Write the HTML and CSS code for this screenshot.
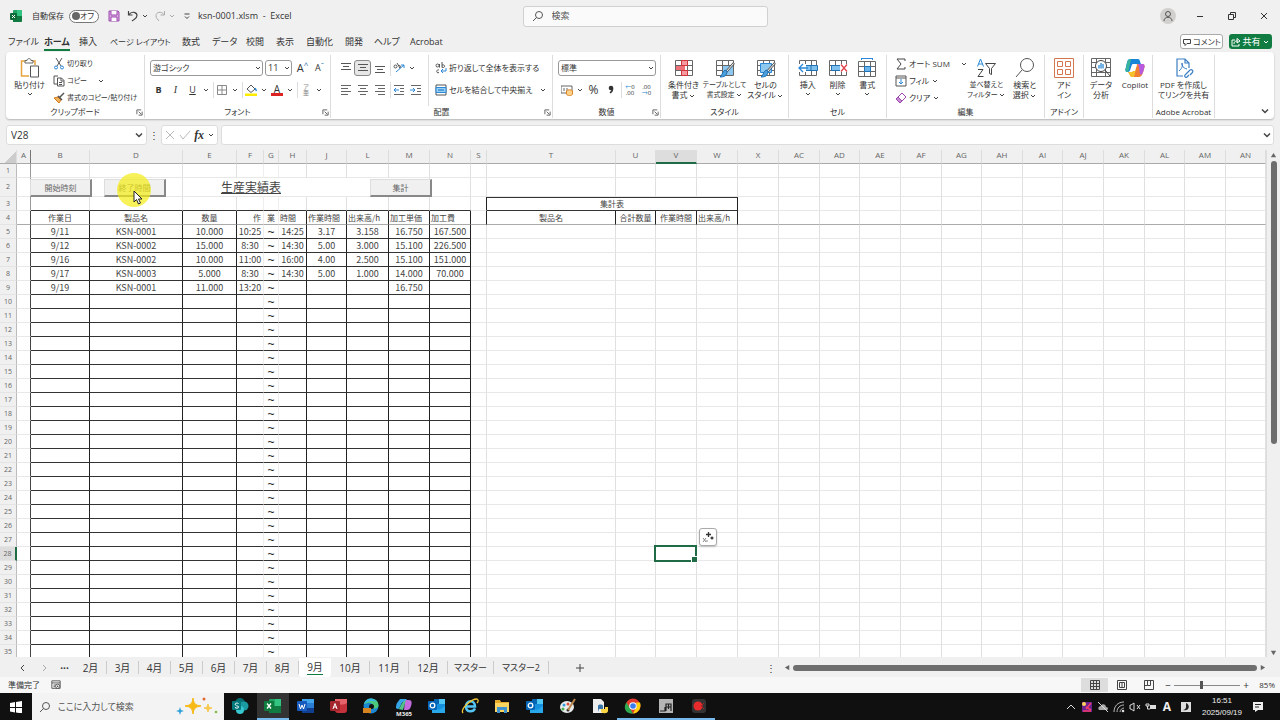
FILE: index.html
```html
<!DOCTYPE html>
<html lang="ja">

<head>
    <meta charset="UTF-8">
    <meta name="viewport" content="width=device-width, initial-scale=1.0">
    <title>ksn-0001.xlsm - Excel</title>
    <link rel="stylesheet" href="styles.css">
</head>

<body>
    <!-- アイコン定義 -->
    <svg class="sprite" aria-hidden="true">
        <symbol id="chev" viewBox="0 0 8 8"><path d="M2 3l2 2 2-2" fill="none" stroke="#444" /></symbol>
        <symbol id="launch" viewBox="0 0 8 8"><path d="M1 6V1h5M3 3l3 3M7 3v4H3" fill="none" stroke="#555" /></symbol>
        <symbol id="grid" viewBox="0 0 20 20"><path d="M1.500 2.500h17v15h-17zM1.500 7.500h17M1.500 12.500h17M7.500 2.500v15M13.500 2.500v15" fill="#fff" stroke="#666" /></symbol>
        <symbol id="person" viewBox="0 0 16 16"><circle cx="8" cy="8" r="8" fill="#d2d0ce" /><circle cx="8" cy="6" r="2.500" fill="none" stroke="#555" /><path d="M4 13c0-5 8-5 8 0" fill="none" stroke="#555" /></symbol>
        <symbol id="lens" viewBox="0 0 12 12"><circle cx="7" cy="5" r="3.500" fill="none" stroke="#555" /><path d="M4.500 7.500L1 11" stroke="#555" /></symbol>
        <symbol id="outlook" viewBox="0 0 18 16"><path d="M6 1h11v13H6z" fill="#1490df" /><path d="M6 1h5v5H6z" fill="#0a64ad" /><path d="M11 1h6v5h-6z" fill="#50c8f5" /><path d="M4 8l7 4 6-4v7H4z" fill="#28a8ea" /><rect y="3" width="9" height="9" rx="1" fill="#0364b8" /><circle cx="4.500" cy="7.500" r="2.300" fill="none" stroke="#fff" stroke-width="1.300" /></symbol>
    </svg>

    <!-- タイトルバー -->
    <header class="titlebar">
        <div class="quick">
            <svg class="logo" viewBox="0 0 12 12"><rect x="3" width="9" height="12" rx="1" fill="#21a366" /><path d="M3 6h9v5l-1 1H3z" fill="#107c41" /><path d="M7 0h4l1 1v5H7z" fill="#33c481" /><rect y="3" width="7" height="7" rx="1" fill="#0f6b38" /><path d="M2 5l3 3M5 5L2 8" stroke="#fff" /></svg>
            <label for="autosave">自動保存</label>
            <label class="toggle"><input type="checkbox" id="autosave"><span>オフ</span></label>
            <button class="q save" aria-label="上書き保存"><svg viewBox="0 0 12 12"><path d="M1 1h9l1 1v9H1z" fill="#d9a5e3" stroke="#9b4aab" /><path d="M3 1v4h6V1M3 11V7h6v4" fill="#fff" stroke="#9b4aab" /></svg></button>
            <button class="q" aria-label="元に戻す"><svg viewBox="0 0 12 12"><path d="M1.500 1v4h4M2 4.500c3-4 8-2 8 1S7 9 5 11" fill="none" stroke="#444" stroke-width="1.200" /></svg></button>
            <button class="drop" aria-label="元に戻す履歴"><svg><use href="#chev" /></svg></button>
            <button class="q pale" aria-label="やり直し"><svg viewBox="0 0 12 12"><path d="M10.500 1v4h-4M10 4.500c-3-4-8-2-8 1s2 4 3 5.500" fill="none" stroke="#444" /></svg></button>
            <button class="drop pale" aria-label="やり直し履歴"><svg><use href="#chev" /></svg></button>
            <button class="q more" aria-label="クイック アクセス"><svg viewBox="0 0 12 12"><path d="M3.500 4h5M4 6.500l2 2 2-2" fill="none" stroke="#444" /></svg></button>
            <span class="file-name">ksn-0001.xlsm&nbsp; - &nbsp;Excel</span>
        </div>
        <div class="search">
            <svg><use href="#lens" /></svg>
            <input type="text" placeholder="検索" aria-label="検索">
        </div>
        <div class="window-buttons">
            <button class="avatar" aria-label="アカウント"><svg><use href="#person" /></svg></button>
            <button aria-label="最小化"><svg viewBox="0 0 12 12"><path d="M3 6.500h6" stroke="#333" /></svg></button>
            <button aria-label="元のサイズ"><svg viewBox="0 0 12 12"><path d="M2.500 4.500h5v5h-5zM4.500 4.500v-2h5v5h-2" fill="none" stroke="#333" /></svg></button>
            <button aria-label="閉じる"><svg viewBox="0 0 12 12"><path d="M3 3l6 6M9 3L3 9" stroke="#333" /></svg></button>
        </div>
    </header>

    <!-- リボンタブ -->
    <nav class="menu">
        <a href="#">ファイル</a><a href="#" class="active">ホーム</a><a href="#">挿入</a><a href="#" class="long">ページ レイアウト</a><a href="#">数式</a><a href="#">データ</a><a href="#">校閲</a><a href="#">表示</a><a href="#">自動化</a><a href="#">開発</a><a href="#">ヘルプ</a><a href="#">Acrobat</a>
        <div class="menu-right">
            <button class="comment"><svg viewBox="0 0 10 10"><path d="M1.500 2.500h7v4H5L3 8.500v-2H1.500z" fill="none" stroke="#444" /></svg>コメント</button>
            <button class="share"><svg viewBox="0 0 10 10"><path d="M4 3H1v6h7V7M3 7c0-3 2-3 4-3M6 1.500L9 4 6 6z" fill="none" stroke="#fff" /></svg>共有<svg class="caret" viewBox="0 0 8 8"><path d="M2 3l2 2 2-2" fill="none" stroke="#fff" /></svg></button>
        </div>
    </nav>

    <!-- リボン -->
    <section class="ribbon">
        <div class="group g-clip">
            <div class="tools">
                <button class="big"><svg viewBox="0 0 20 20"><path d="M5 3H1.500v15H9M12 3h3v4" fill="none" stroke="#e8a33d" stroke-width="1.500" /><path d="M5 5V2.500h2C7 0 11 0 11 2.500h2V5z" fill="#fff" stroke="#666" /><path d="M10.500 8h8v11h-8z" fill="#fff" stroke="#555" /></svg><span>貼り付け</span><svg class="caret"><use href="#chev" /></svg></button>
                <div class="rows">
                    <button><svg viewBox="0 0 12 12"><path d="M3 0l5 8M9 0L4 8" stroke="#555" /><circle cx="3" cy="9.500" r="1.500" fill="none" stroke="#2b88d8" /><circle cx="9" cy="9.500" r="1.500" fill="none" stroke="#2b88d8" /></svg>切り取り</button>
                    <button><svg viewBox="0 0 12 12"><path d="M4 9H1V1h4M4.500 3h4L11 5.500V11H4.500zM8 3v3h3M6 7.500h3M6 9.500h3" fill="none" stroke="#555" /></svg>コピー<svg class="caret far"><use href="#chev" /></svg></button>
                    <button><svg viewBox="0 0 12 12"><path d="M1 6l5 5 2-3-3-3z" fill="#f2b25c" stroke="#d07a1c" /><path d="M5 4l4 4M7 5l4-4" stroke="#555" stroke-width="1.500" /></svg>書式のコピー/貼り付け</button>
                </div>
            </div>
            <div class="caption">クリップボード<svg><use href="#launch" /></svg></div>
        </div>

        <div class="group g-font">
            <div class="tools lines">
                <div class="line">
                    <span class="combo font-name"><select aria-label="フォント"><option>游ゴシック</option></select><svg><use href="#chev" /></svg></span>
                    <span class="combo font-size"><select aria-label="フォント サイズ"><option>11</option></select><svg><use href="#chev" /></svg></span>
                    <button class="t grow">A<sup>^</sup></button>
                    <button class="t shrink">A<sup>ˇ</sup></button>
                </div>
                <div class="line">
                    <button class="t"><b>B</b></button><button class="t serif"><i>I</i></button><button class="t"><u>U</u></button><button class="drop" aria-label="下線"><svg><use href="#chev" /></svg></button>
                    <button class="t bar" aria-label="罫線"><svg viewBox="0 0 12 12"><path d="M1.500 1.500h9v9h-9zM6 1.500v9M1.500 6h9" fill="none" stroke="#888" /></svg></button><button class="drop" aria-label="罫線の種類"><svg><use href="#chev" /></svg></button>
                    <button class="t bar" aria-label="塗りつぶし"><svg viewBox="0 0 12 12"><path d="M2 5l4-4 4 4-4 3.500z" fill="#fff" stroke="#555" /><path d="M10 4l1.500 3" stroke="#2b88d8" stroke-width="1.500" /><path d="M0 9.500h12V12H0z" fill="#ffec00" /></svg></button><button class="drop" aria-label="塗りつぶしの色"><svg><use href="#chev" /></svg></button>
                    <button class="t color">A</button><button class="drop" aria-label="文字の色"><svg><use href="#chev" /></svg></button>
                    <button class="t bar ruby"><span>ア<br>亜</span></button><button class="drop" aria-label="ふりがな"><svg><use href="#chev" /></svg></button>
                </div>
            </div>
            <div class="caption">フォント<svg><use href="#launch" /></svg></div>
        </div>

        <div class="group g-align">
            <div class="tools">
                <div class="lines align-left">
                    <div class="line">
                        <button class="t" aria-label="上揃え"><svg viewBox="0 0 12 12"><path d="M1 1.500h10M3 4.500h6M1 7.500h10" stroke="#555" /></svg></button>
                        <button class="t on" aria-label="上下中央揃え"><svg viewBox="0 0 12 12"><path d="M1 2.500h10M3 5.500h6M1 8.500h10" stroke="#555" /></svg></button>
                        <button class="t" aria-label="下揃え"><svg viewBox="0 0 12 12"><path d="M1 4.500h10M3 7.500h6M1 10.500h10" stroke="#555" /></svg></button>
                        <button class="t bar" aria-label="方向"><svg viewBox="0 0 12 12"><path d="M3 10l8-7M8 3h3v3" fill="none" stroke="#2b88d8" /><circle cx="2.500" cy="4.500" r="1.500" fill="none" stroke="#555" /><path d="M4 1l3 5M6 6c2 0 2-3 0-2.500" fill="none" stroke="#555" /></svg></button><button class="drop" aria-label="方向の種類"><svg><use href="#chev" /></svg></button>
                    </div>
                    <div class="line">
                        <button class="t" aria-label="左揃え"><svg viewBox="0 0 12 12"><path d="M1 1.500h10M1 4.500h7M1 7.500h10M1 10.500h7" stroke="#666" /></svg></button>
                        <button class="t" aria-label="中央揃え"><svg viewBox="0 0 12 12"><path d="M1 1.500h10M3 4.500h6M1 7.500h10M3 10.500h6" stroke="#666" /></svg></button>
                        <button class="t" aria-label="右揃え"><svg viewBox="0 0 12 12"><path d="M1 1.500h10M4 4.500h7M1 7.500h10M4 10.500h7" stroke="#666" /></svg></button>
                        <button class="t bar" aria-label="インデントを減らす"><svg viewBox="0 0 12 12"><path d="M1 1.500h10M7 4.500h4M7 7.500h4M1 10.500h10" stroke="#666" /><path d="M6 6H1M3 4L1 6l2 2" fill="none" stroke="#2b88d8" /></svg></button>
                        <button class="t" aria-label="インデントを増やす"><svg viewBox="0 0 12 12"><path d="M1 1.500h10M7 4.500h4M7 7.500h4M1 10.500h10" stroke="#666" /><path d="M0 6h5M3 4l2 2-2 2" fill="none" stroke="#2b88d8" /></svg></button>
                    </div>
                </div>
                <div class="lines align-right">
                    <button class="line"><svg viewBox="0 0 12 12"><circle cx="2.500" cy="3.500" r="1.500" fill="none" stroke="#555" /><path d="M4.500 2v3.500M7 0v5.500M7 3c4-1 3 4 0 2M4 8c-3-1-3 4 0 2.500" fill="none" stroke="#555" /><path d="M11 6v3H6M8 7L6 9l2 2" fill="none" stroke="#2b88d8" /></svg>折り返して全体を表示する</button>
                    <button class="line"><svg viewBox="0 0 12 12"><path d="M1 1h10v10H1z" fill="#fff" stroke="#555" /><path d="M1 3.500h10v5H1z" fill="#9bd0f5" stroke="#2b88d8" /><path d="M3 6h6" stroke="#106ebe" /></svg>セルを結合して中央揃え<svg class="caret far"><use href="#chev" /></svg></button>
                </div>
            </div>
            <div class="caption">配置<svg><use href="#launch" /></svg></div>
        </div>

        <div class="group g-num">
            <div class="tools lines">
                <div class="line"><span class="combo format"><select aria-label="表示形式"><option>標準</option></select><svg><use href="#chev" /></svg></span></div>
                <div class="line">
                    <button class="t" aria-label="通貨"><svg viewBox="0 0 12 12"><path d="M0 2h11v7H0zM3 4v3M6 4v3" fill="none" stroke="#666" /><ellipse cx="8.500" cy="7" rx="3" ry="1.200" fill="#ffd28a" stroke="#d8852a" /><path d="M5.500 7v3c0 2 6 2 6 0V7" fill="#ffd28a" stroke="#d8852a" /></svg></button><button class="drop" aria-label="通貨の種類"><svg><use href="#chev" /></svg></button>
                    <button class="t percent">%</button>
                    <button class="t comma" aria-label="桁区切り"><svg viewBox="0 0 12 12"><circle cx="6" cy="4" r="2.300" fill="#333" /><path d="M7.500 4c.5 3-1 4-2.500 5" fill="none" stroke="#333" stroke-width="1.400" /></svg></button>
                    <button class="t bar digits"><span><em>←</em>0<br>.00</span></button>
                    <button class="t digits"><span>.00<br><em>→</em>0</span></button>
                </div>
            </div>
            <div class="caption">数値<svg><use href="#launch" /></svg></div>
        </div>

        <div class="group g-style">
            <div class="tools">
                <button class="big"><svg viewBox="0 0 20 20"><use href="#grid" /><path d="M7.500 2.500h6v5h-6zM7.500 12.500h6v5h-6z" fill="#f59aa0" stroke="#d13438" /><path d="M2 8h9v4H2z" fill="#ee7078" /></svg><span>条件付き<br>書式<svg><use href="#chev" /></svg></span></button>
                <button class="big narrow"><svg viewBox="0 0 20 20"><use href="#grid" /><path d="M8 8h10v9H8z" fill="#8cc8f0" /><path d="M19 5l-8 9" stroke="#555" stroke-width="2.500" /><path d="M18.500 5.500l-7 8" stroke="#fff" /><path d="M12 13c0 5-3 6-7 6 2-1 2-5 5-7z" fill="#4ba0dc" stroke="#2171b5" /></svg><span>テーブルとして<br>書式設定<svg><use href="#chev" /></svg></span></button>
                <button class="big"><svg viewBox="0 0 20 20"><use href="#grid" /><path d="M4.500 5.500h11v9h-11z" fill="#8cc8f0" stroke="#2b88d8" /><path d="M19 5l-8 9" stroke="#555" stroke-width="2.500" /><path d="M18.500 5.500l-7 8" stroke="#fff" /><path d="M12 13c0 5-3 6-7 6 2-1 2-5 5-7z" fill="#4ba0dc" stroke="#2171b5" /></svg><span>セルの<br>スタイル<svg><use href="#chev" /></svg></span></button>
            </div>
            <div class="caption">スタイル</div>
        </div>

        <div class="group g-cell">
            <div class="tools">
                <button class="big"><svg viewBox="0 0 20 20"><use href="#grid" /><path d="M6 7.500h13.500v5H6z" fill="#7fc1ee" stroke="#2171b5" /><path d="M13 7.500v5" stroke="#2171b5" /><path d="M0 6h8v8H0z" fill="#fff" /><path d="M10 10H1M5 6l-4 4 4 4" fill="none" stroke="#2b88d8" stroke-width="1.300" /></svg><span>挿入</span><svg class="caret"><use href="#chev" /></svg></button>
                <button class="big"><svg viewBox="0 0 20 20"><use href="#grid" /><path d="M3.500 7.500h9v5h-9z" fill="#7fc1ee" stroke="#2171b5" /><path d="M12 6h8v8h-8z" fill="#fff" /><path d="M13 6.500l6 7M19 6.500l-6 7" stroke="#e0444c" stroke-width="1.300" /></svg><span>削除</span><svg class="caret"><use href="#chev" /></svg></button>
                <button class="big"><svg viewBox="0 0 20 20"><use href="#grid" y="1" /><path d="M7.500 8.500h6v5h-6z" fill="#6bb5ea" stroke="#2171b5" /><path d="M4 .5h12M4.500 0v2M15.500 0v2" stroke="#2b88d8" /></svg><span>書式</span><svg class="caret"><use href="#chev" /></svg></button>
            </div>
            <div class="caption">セル</div>
        </div>

        <div class="group g-edit">
            <div class="tools">
                <div class="rows">
                    <button><svg viewBox="0 0 12 12"><path d="M10 3V1H2l4 5-4 5h8V9" fill="none" stroke="#444" /></svg>オート SUM<svg class="caret far"><use href="#chev" /></svg></button>
                    <button><svg viewBox="0 0 12 12"><path d="M1 1h10v10H1zM1 3h10" fill="none" stroke="#555" /><path d="M6 4v5M4 7l2 2 2-2" fill="none" stroke="#2b88d8" /></svg>フィル<svg class="caret"><use href="#chev" /></svg></button>
                    <button><svg viewBox="0 0 12 12"><path d="M1 7l6-6 4 4-6 6z" fill="#fff" stroke="#9b4aab" /><path d="M1 7l2-2 4 4-2 2z" fill="#c98ad6" stroke="#9b4aab" /></svg>クリア<svg class="caret"><use href="#chev" /></svg></button>
                </div>
                <button class="big narrow"><svg viewBox="0 0 20 20"><path d="M1.500 8.500L4.500 1l3 7.500M2.500 6h4" fill="none" stroke="#2b88d8" /><path d="M2 11.500h5l-5 7h5.500" fill="none" stroke="#444" /><path d="M9.500 5.500h10l-4 5v6l-2-1v-5z" fill="none" stroke="#444" /></svg><span>並べ替えと<br>フィルター<svg><use href="#chev" /></svg></span></button>
                <button class="big"><svg viewBox="0 0 20 20"><circle cx="12" cy="7" r="6.500" fill="none" stroke="#555" /><path d="M7 12L1 19" stroke="#555" /></svg><span>検索と<br>選択<svg><use href="#chev" /></svg></span></button>
            </div>
            <div class="caption">編集</div>
        </div>

        <div class="group g-addin">
            <div class="tools">
                <button class="big"><svg viewBox="0 0 20 20"><path d="M.5 .5h19v19H.5zM3.500 3.500h5v5h-5zM11.500 3.500h5v5h-5zM3.500 11.500h5v5h-5zM11.500 11.500h5v5h-5z" fill="none" stroke="#d5774e" /></svg><span>アド<br>イン</span></button>
            </div>
            <div class="caption">アドイン</div>
        </div>

        <div class="group g-data">
            <div class="tools">
                <button class="big"><svg viewBox="0 0 20 20"><path d="M.5 .5h19v18H.5zM.5 4.500h19M.5 9.500h19M.5 14.500h19M5.500 .5v18M14.500 .5v18" fill="none" stroke="#666" /><circle cx="10" cy="8" r="5.500" fill="#fff" stroke="#444" /><path d="M8 10.500V7M10 10.500V5M12 10.500V6" stroke="#2b88d8" stroke-width="1.300" /><path d="M14 12l5 6" stroke="#444" /></svg><span>データ<br>分析</span></button>
                <button class="big"><svg viewBox="0 0 20 20"><path d="M5 1h8c2 0 2 3 3 5H8C6 6 6 14 3 14c-3 0-3-2-2-5C2 5 2 1 5 1z" fill="#1784d8" /><path d="M1 10c1-4 1-9 5-9-1 5-2 11-3 13-3 0-3-2-2-4z" fill="#36b59b" /><path d="M3 14h4c3 0 3-8 6-8h4c3 0 3 2 2 5-1 4-2 8-5 8H7c-2 0-2-3-4-5z" fill="#f08030" /><path d="M13 6h4c3 0 3 2 2 5-1 3-1 4-3 6-2-1-1-6-3-11z" fill="#b65be0" /><path d="M3 14h4l4-3-2 8H7c-2 0-2-3-4-5z" fill="#f5c02c" /><path d="M9 7h3l-2 6H7z" fill="#fff" /></svg><span>Copilot</span></button>
            </div>
            <div class="caption"></div>
        </div>

        <div class="group g-pdf">
            <div class="tools">
                <button class="big"><svg viewBox="0 0 20 20"><path d="M9 18H3V1h8l4 4v5M11 1v4h4" fill="none" stroke="#3b7fc4" stroke-width="1.200" /><path d="M5 13c4-3 4-8 3-8s0 5 5 6" fill="none" stroke="#3b7fc4" /><path d="M12 16l4-4c2-1 4 1 2 3l-2 2M14 14l-3 3c-1 2 1 3 2 2l2-2" fill="none" stroke="#3b7fc4" stroke-width="1.200" /></svg><span>PDF を作成し<br>てリンクを共有</span></button>
            </div>
            <div class="caption">Adobe Acrobat</div>
        </div>
        <button class="collapse drop" aria-label="リボンを折りたたむ"><svg><use href="#chev" /></svg></button>
    </section>

    <!-- 数式バー -->
    <div class="formula">
        <div class="name-box"><input type="text" value="V28" aria-label="名前ボックス"><svg><use href="#chev" /></svg></div>
        <span class="dots">⋮</span>
        <div class="fx">
            <button class="pale" aria-label="キャンセル"><svg viewBox="0 0 12 12"><path d="M2 2l8 8M10 2l-8 8" stroke="#555" /></svg></button>
            <button class="pale" aria-label="入力"><svg viewBox="0 0 12 12"><path d="M1 6l3 4 7-8" fill="none" stroke="#555" /></svg></button>
            <button class="fn">fx</button>
            <svg class="caret"><use href="#chev" /></svg>
        </div>
        <div class="formula-input"><input type="text" aria-label="数式バー"><svg><use href="#chev" /></svg></div>
    </div>

    <!-- シート -->
    <main class="sheet">
        <div class="cells">
            <table id="grid-table"></table>
            <button class="form-button start">開始時刻</button>
            <button class="form-button end">終了時間</button>
            <button class="form-button total">集計</button>
            <div class="pointer"><svg viewBox="0 0 10 16"><path d="M1 1v11l2.500-2.500L5.500 14l2-1-2-4H9z" fill="#fff" stroke="#222" /></svg></div>
        </div>
        <div class="vscroll">
            <svg viewBox="0 0 8 8"><path d="M4 1l3 5H1z" fill="#666" /></svg>
            <div class="track"><div class="thumb"></div></div>
            <svg viewBox="0 0 8 8"><path d="M4 7l3-5H1z" fill="#666" /></svg>
        </div>
    </main>

    <!-- シート見出し -->
    <div class="sheet-tabs">
        <button class="nav" aria-label="前のシート"><svg viewBox="0 0 8 8"><path d="M5 1L2 4l3 3" fill="none" stroke="#444" /></svg></button>
        <button class="nav pale" aria-label="次のシート"><svg viewBox="0 0 8 8"><path d="M3 1l3 3-3 3" fill="none" stroke="#444" /></svg></button>
        <button class="nav"><b>···</b></button>
        <button class="tab">2月</button><button class="tab">3月</button><button class="tab">4月</button><button class="tab">5月</button><button class="tab">6月</button><button class="tab">7月</button><button class="tab">8月</button><button class="tab active"><span>9月</span></button><button class="tab mid">10月</button><button class="tab mid">11月</button><button class="tab mid">12月</button><button class="tab wide">マスター</button><button class="tab wider">マスター2</button>
        <button class="add" aria-label="新しいシート"><svg viewBox="0 0 8 8"><path d="M4 0v8M0 4h8" stroke="#444" /></svg></button>
        <div class="hscroll">
            <span class="dots">⋮</span>
            <svg viewBox="0 0 8 8"><path d="M1 4l5-3v6z" fill="#666" /></svg>
            <div class="thumb"></div>
            <svg viewBox="0 0 8 8"><path d="M7 4L2 1v6z" fill="#666" /></svg>
        </div>
    </div>

    <!-- ステータスバー -->
    <div class="status">
        <span>準備完了</span>
        <svg class="macro" viewBox="0 0 12 12"><path d="M1 1h10v9H1zM1 3.500h10M3 6h3M3 8h2" fill="none" stroke="#444" /><circle cx="8" cy="7.500" r="2.500" fill="#fff" stroke="#444" /><circle cx="8" cy="7.500" r="1" fill="#444" /></svg>
        <div class="views">
            <button class="on" aria-label="標準"><svg viewBox="0 0 10 10"><path d="M.5 .5h9v9h-9zM.5 3.500h9M.5 6.500h9M3.500 .5v9M6.500 .5v9" fill="none" stroke="#444" /></svg></button>
            <button aria-label="ページ レイアウト"><svg viewBox="0 0 10 10"><path d="M.5 .5h9v9h-9zM2.500 2.500h5v5h-5zM4 4h2M4 6h2" fill="none" stroke="#444" /></svg></button>
            <button aria-label="改ページ プレビュー"><svg viewBox="0 0 10 10"><path d="M.5 .5h9v9h-9zM3.500 .5v5H.5M6.500 .5v5h-3" fill="none" stroke="#444" /></svg></button>
            <span class="sign">−</span>
            <input type="range" min="10" max="190" value="85" aria-label="ズーム">
            <span class="sign">+</span>
            <span class="zoom">85%</span>
        </div>
    </div>

    <!-- タスクバー -->
    <footer class="taskbar">
        <button class="win" aria-label="スタート"><svg viewBox="0 0 12 12"><path d="M0 2l5-1v5H0zM6 1l6-1v6H6zM0 7h5v4.500l-5-1zM6 7h6v5.500l-6-1z" fill="#fff" /></svg></button>
        <div class="task-search">
            <svg><use href="#lens" /></svg>
            <input type="text" placeholder="ここに入力して検索" aria-label="ここに入力して検索">
            <svg class="spark" viewBox="0 0 42 20"><path d="M17 1c1 6 2 7 8 8-6 1-7 2-8 8-1-6-2-7-8-8 6-1 7-2 8-8z" fill="#f7b916" stroke="#f7b916" /><path d="M32 7c.5 3 1 4 4 4-3 .5-3.500 1-4 4-.5-3-1-3.500-4-4 3 0 3.500-1 4-4z" fill="#f9c74a" stroke="#f9c74a" /><path d="M4 10l1 3 3 1-3 1-1 3-1-3-3-1 3-1z" fill="#2f9fd8" /><circle cx="28" cy="2" r="1.500" fill="#e06830" /><circle cx="40" cy="15" r="1.300" fill="#7bc043" /></svg>
        </div>
        <div class="apps">
            <button aria-label="SharePoint"><svg viewBox="0 0 18 16"><circle cx="9" cy="5" r="5" fill="#036c70" /><circle cx="13" cy="8" r="4.500" fill="#1a9ba1" /><circle cx="9" cy="12" r="4" fill="#37c6d0" /><rect x="1" y="3" width="9" height="9" rx="1" fill="#03787c" /><path d="M7.500 5.500c-2-1-4 0-3 1.500s3 .5 3 2-2 1.500-3.500.5" fill="none" stroke="#fff" /></svg></button>
            <button class="running current" aria-label="Excel"><svg viewBox="0 0 18 16"><rect x="5" y="1" width="12" height="14" rx="1" fill="#21a366" /><path d="M5 8h12v7H5z" fill="#107c41" /><path d="M11 1h6v7h-6z" fill="#33c481" /><rect y="3" width="10" height="10" rx="1" fill="#0f7a3e" /><path d="M3 5.500l4 5M7 5.500l-4 5" stroke="#fff" stroke-width="1.300" /></svg></button>
            <button aria-label="Word"><svg viewBox="0 0 18 16"><rect x="5" y="1" width="12" height="14" rx="1" fill="#2b7cd3" /><path d="M5 1h12v4H5z" fill="#41a5ee" /><path d="M5 10h12v5H5z" fill="#103f91" /><rect y="3" width="10" height="10" rx="1" fill="#185abd" /><path d="M2 6l1.500 5L5 7l1.500 4L8 6" fill="none" stroke="#fff" /></svg></button>
            <button aria-label="Access"><svg viewBox="0 0 18 16"><rect x="5" y="1" width="12" height="14" rx="3" fill="#c7313c" /><path d="M5 1h12v4c-3 2-9 2-12 0z" fill="#e8636b" /><rect y="3" width="10" height="10" rx="1" fill="#a4262c" /><path d="M3 11l2-5.500L7 11M3.500 9h3" fill="none" stroke="#fff" /></svg></button>
            <button aria-label="Edge"><svg viewBox="0 0 18 16"><circle cx="9" cy="8" r="7.500" fill="#1b86d2" /><path d="M2 6C4-1 16-1 16.500 7c0 4-4 4-6 3 2-3-1-6-5-5z" fill="#4cc87a" /><path d="M2 6c2-7 10-7 13-2-5-2-9-1-13 2z" fill="#36b8e0" /><circle cx="9.500" cy="8.500" r="2.500" fill="#111" /><rect x="1" y="10" width="8" height="5" fill="#d58420" /></svg></button>
            <button aria-label="M365"><svg viewBox="0 0 18 16"><path d="M5 1h6l3 3H8C6 5 5 11 3 11c-3 0-2-3-1-6z" fill="#35a6e8" /><path d="M10 2h4c3 0 3 3 2 6s-2 4-4 4H9z" fill="#c46be0" /><path d="M3 11c2 0 3-5 5-7l3-2-3 10z" fill="#53c28b" /></svg><span class="tag">M365</span></button>
            <button aria-label="Outlook"><svg viewBox="0 0 18 16"><use href="#outlook" /></svg></button>
            <button aria-label="Internet Explorer"><svg viewBox="0 0 18 16"><path d="M5 8.500h9c0-7-9-7-9 0 0 6 7 6 9 2" fill="none" stroke="#54c4f2" stroke-width="2.500" /><path d="M2 15C-1 11 10 1 16 1c2 1 1 3 0 4" fill="none" stroke="#f2c935" stroke-width="1.300" /></svg></button>
            <button aria-label="エクスプローラー"><svg viewBox="0 0 18 16"><path d="M2 2h5l1 2h8v10H2z" fill="#e3a92b" /><path d="M2 5h14v9H2z" fill="#fcd462" /><path d="M4 15V9h10v6h-3v-3H7v3z" fill="#3f94d0" /></svg></button>
            <button aria-label="Outlook"><svg viewBox="0 0 18 16"><use href="#outlook" /></svg></button>
            <button aria-label="ペイント"><svg viewBox="0 0 18 16"><ellipse cx="8" cy="9" rx="7" ry="6" fill="#e9ecec" /><circle cx="5" cy="7" r="1.500" fill="#3498db" /><circle cx="9" cy="6" r="1.500" fill="#e04a3a" /><circle cx="4" cy="11" r="1.500" fill="#4caf50" /><circle cx="9" cy="12" r="1.500" fill="#222" /><path d="M16 1L9 12" stroke="#b98449" stroke-width="2" /></svg></button>
            <button aria-label="Python"><svg viewBox="0 0 18 16"><path d="M2 1h8l3 3v11H2z" fill="#eee" /><path d="M7 11V8c0-2 5-2 5 0v3H8v3" fill="#3874a8" /><path d="M17 10v3c0 3-7 3-7 0v-2h4V9h3z" fill="#fbd444" /></svg></button>
            <button class="running" aria-label="Chrome"><svg viewBox="0 0 18 16"><circle cx="9" cy="8" r="7.500" fill="#e33b2e" /><path d="M2.500 4.500L9 15.500C1 16-1 9 2.500 4.500z" fill="#2da94f" /><path d="M9 15.500L13 8l-1-3.500h4c2 5-2 11-7 11z" fill="#fdd20a" /><circle cx="9" cy="8" r="3.800" fill="#fff" /><circle cx="9" cy="8" r="2.800" fill="#3b7ded" /></svg></button>
            <button class="running" aria-label="キャプチャー"><svg viewBox="0 0 18 16"><rect x="2" y="1" width="14" height="14" fill="#b5b5b5" /><path d="M3 13h5V9M9 13V6h5v7M9 9h5M11.500 6v5" fill="none" stroke="#222" stroke-width="1.200" /></svg></button>
            <button class="running" aria-label="録画"><svg viewBox="0 0 18 16"><rect x="2" y="1" width="14" height="14" rx="3" fill="#333" /><circle cx="8" cy="8" r="4.500" fill="#e52b2b" /><path d="M14 5l-3 3 3 3" fill="none" stroke="#a22" /></svg></button>
        </div>
        <div class="tray">
            <svg viewBox="0 0 12 12"><path d="M2 8l4-4 4 4" fill="none" stroke="#ddd" /></svg>
            <svg viewBox="0 0 12 12"><rect x="1" y="1" width="10" height="10" fill="#6a2390" /><circle cx="3" cy="3" r="2" fill="#ffd35a" /><path d="M2 10h8M10 2L5 8M5 6l5 3" stroke="#f03a6a" stroke-width="1.500" /></svg>
            <svg viewBox="0 0 12 12"><path d="M2 9c-2-3 1-4 2-4 1-3 5-2 5 1 3 0 2 3 1 3z" fill="#aaa" /><path d="M1 1l10 10" stroke="#ddd" /></svg>
            <svg viewBox="0 0 12 12"><path d="M1 11C1 5 5 1 11 1M4 11c0-4 3-7 7-7M7 11c0-2 2-4 4-4" fill="none" stroke="#bbb" /><circle cx="10" cy="10" r="1.300" fill="#ddd" /></svg>
            <svg viewBox="0 0 12 12"><path d="M1 4h1l3-2v8L2 8H1zM8 4l3 4M11 4L8 8" fill="none" stroke="#ddd" /></svg>
            <svg viewBox="0 0 12 12"><path d="M1 3h3v2H1zM2.500 5v3H5" fill="none" stroke="#ddd" /><path d="M5 4h6v4H5z" fill="#ddd" /></svg>
            <span class="ime">A</span>
            <svg class="moon" viewBox="0 0 12 12"><rect x="1" y="1" width="10" height="10" fill="#ddd" /><path d="M6 2v4c0 2-2 3-3 3 6 2 8-5 3-7z" fill="#222" /></svg>
            <div class="clock">16:51<br>2025/09/19</div>
            <svg viewBox="0 0 12 12"><path d="M1 1h10v8H6l-3 2V9H1z" fill="#eee" /><path d="M3 3.500h6M3 6h4" stroke="#222" /></svg>
        </div>
    </footer>

    <script>
        // 列名と幅（最後の列は残り幅）
        const columns = [
            ['A', 14], ['B', 59], ['D', 93], ['E', 54], ['F', 27], ['G', 15], ['H', 28], ['J', 40], ['L', 42],
            ['M', 41], ['N', 41], ['S', 16], ['T', 129], ['U', 40], ['V', 41], ['W', 41], ['X', 41],
            ['AC', 41], ['AD', 40], ['AE', 41], ['AF', 41], ['AG', 40], ['AH', 41], ['AI', 40], ['AJ', 41],
            ['AK', 41], ['AL', 40], ['AM', 41], ['AN', 0]
        ];
        const report = 'BDEFGHJLMN';

        // セルの値
        const rows = {
            4: { B: '作業日', D: '製品名', E: '数量', F: '作', G: '業', H: '時間', J: '作業時間', L: '出来高/h', M: '加工単価', N: '加工費', T: '製品名', U: '合計数量', V: '作業時間', W: '出来高/h' },
            5: { B: '9/11', D: 'KSN-0001', E: '10.000', F: '10:25', H: '14:25', J: '3.17', L: '3.158', M: '16.750', N: '167.500' },
            6: { B: '9/12', D: 'KSN-0002', E: '15.000', F: '8:30', H: '14:30', J: '5.00', L: '3.000', M: '15.100', N: '226.500' },
            7: { B: '9/16', D: 'KSN-0002', E: '10.000', F: '11:00', H: '16:00', J: '4.00', L: '2.500', M: '15.100', N: '151.000' },
            8: { B: '9/17', D: 'KSN-0003', E: '5.000', F: '8:30', H: '14:30', J: '5.00', L: '1.000', M: '14.000', N: '70.000' },
            9: { B: '9/19', D: 'KSN-0001', E: '11.000', F: '13:20', M: '16.750' }
        };

        const marker = '<div class="selected"></div><button class="smart" aria-label="クイック分析"><svg viewBox="0 0 12 12"><path d="M6.500 1v5M4 3.500h5M10 5.500v3M8.500 7h3" stroke="#333" stroke-width="1.300"/><path d="M1 7l3 4M4 7l-3 4M5 9v2" stroke="#888"/></svg></button>';

        function cell(name, row) {
            const classes = ['c-' + name];
            if (name === 'V' && row === 28) {
                return `<td class="c-V cursor">${marker}</td>`;
            }
            if (row === 2 && name === 'E') {
                return '<td class="title" colspan="7">生産実績表</td>';
            }
            if (row === 2 && 'FGHJLM'.includes(name)) {
                return '';
            }
            if (row === 3 && name === 'T') {
                return '<td class="summary" colspan="4">集計表</td>';
            }
            if (row === 3 && 'UVW'.includes(name)) {
                return '';
            }
            if (row >= 3 && report.includes(name)) {
                classes.push('line-bottom');
            }
            if (row >= 4 && report.includes(name) && name !== 'F' && name !== 'G') {
                classes.push('line-right');
            }
            if (row === 4 && 'STUVW'.includes(name)) {
                classes.push('line-right');
            }
            if (row === 3 && name === 'S') {
                classes.push('line-right');
            }
            let value = (rows[row] || {})[name] || '';
            if (row >= 5 && name === 'G') {
                value = '~';
                classes.push('wave');
            }
            return `<td class="${classes.join(' ')}">${value}</td>`;
        }

        let html = '<colgroup><col class="col-number">';
        columns.forEach(([name, width]) => {
            html += width ? `<col style="width:${width}px">` : '<col>';
        });
        html += '</colgroup><thead><tr><th class="corner"></th>';
        columns.forEach(([name]) => {
            html += `<th class="${name === 'V' ? 'picked' : ''} ${name === 'A' ? 'frozen' : ''}">${name}</th>`;
        });
        html += '</tr></thead><tbody>';
        for (let row = 1; row <= 35; row++) {
            html += `<tr class="row-${row}"><th class="${row === 28 ? 'picked' : ''}">${row}</th>`;
            columns.forEach(([name]) => {
                html += cell(name, row);
            });
            html += '</tr>';
        }
        document.getElementById('grid-table').innerHTML = html + '</tbody>';
    </script>
</body>

</html>
```

FILE: styles.css
```css
/* 共通 */
* {
    box-sizing: border-box;
}

body {
    margin: 0;
    height: 100vh;
    display: flex;
    flex-direction: column;
    overflow: hidden;
    background-color: #f0f0f0;
    color: #333;
    font-family: "Open Sans", "Noto Sans CJK JP", sans-serif;
    font-size: 8px;
    font-feature-settings: "palt";
    line-height: 10px;
}

button,
input,
select {
    font: inherit;
    font-feature-settings: inherit;
    color: inherit;
    background: none;
    border: none;
    padding: 0;
    margin: 0;
    outline: none;
}

button {
    display: flex;
    align-items: center;
    justify-content: center;
    white-space: nowrap;
}

a {
    color: inherit;
    text-decoration: none;
    white-space: nowrap;
}

svg {
    display: block;
    flex: none;
    width: 12px;
    height: 12px;
}

.sprite {
    position: absolute;
    width: 0;
    height: 0;
}

.pale {
    opacity: 0.4;
}

.drop {
    width: 10px;
}

.drop svg,
.caret {
    width: 8px;
    height: 8px;
}

/* タイトルバー */
.titlebar {
    flex: none;
    height: 32px;
    display: grid;
    grid-template-columns: 1fr 245px 1fr;
    align-items: center;
    padding-left: 10px;
}

.quick {
    display: flex;
    align-items: center;
}

.logo {
    margin-right: 10px;
}

.toggle {
    width: 30px;
    height: 13px;
    margin: 0 7px 0 5px;
    padding: 0 4px 0 2px;
    display: flex;
    align-items: center;
    justify-content: space-between;
    border: 1px solid #777;
    border-radius: 7px;
    background-color: #fff;
    white-space: nowrap;
}

.toggle input {
    appearance: none;
    flex: none;
    width: 8px;
    height: 8px;
    border-radius: 50%;
    background-color: #666;
}

.q {
    width: 15px;
}

.save {
    margin-right: 4px;
}

.quick .drop {
    margin-right: 2px;
}

.more {
    margin-right: 4px;
}

.file-name {
    font-size: 9px;
    white-space: nowrap;
}

.search {
    height: 21px;
    display: flex;
    align-items: center;
    gap: 8px;
    padding-left: 8px;
    background-color: #fafafa;
    border: 1px solid #d0d0d0;
    border-radius: 3px;
}

.search input {
    flex: 1;
    font-size: 9px;
}

input::placeholder {
    color: #555;
    opacity: 1;
}

.window-buttons {
    display: flex;
    justify-content: flex-end;
}

.window-buttons button {
    width: 32px;
}

.window-buttons .avatar svg {
    width: 16px;
    height: 16px;
}

/* リボンタブ */
.menu {
    flex: none;
    height: 20px;
    display: grid;
    grid-template-columns: 36px 35px 31px 72px 30px 34px 30px 30px 39px 29px 36px 40px 1fr;
    align-items: center;
    padding: 2px 8px 0;
    font-size: 9px;
    line-height: 14px;
}

.menu a {
    justify-self: start;
    border-bottom: 2px solid transparent;
}

.menu .active {
    border-color: #107c41;
    font-weight: bold;
}

.menu .long {
    font-size: 8px;
}

.menu-right {
    display: flex;
    justify-content: flex-end;
    align-self: start;
    gap: 6px;
}

.menu-right button {
    height: 15px;
    width: 43px;
    gap: 1px;
    border-radius: 3px;
}

.menu-right svg {
    width: 10px;
    height: 10px;
}

.menu-right .caret {
    width: 8px;
}

.menu-right .comment {
    border: 1px solid #aaa;
    background-color: #fff;
    font-size: 8px;
}

.share {
    background-color: #107c41;
    color: #fff;
}

/* リボン */
.ribbon {
    flex: none;
    height: 67px;
    margin: 0 6px 6px;
    display: flex;
    background-color: #fff;
    border-radius: 4px;
    box-shadow: 0 1px 2px rgba(0, 0, 0, 0.25);
}

.group {
    flex: none;
    display: flex;
    flex-direction: column;
    margin: 3px 0 1px;
    border-right: 1px solid #ddd;
}

.g-clip { width: 139px; }
.g-font { width: 186px; }
.g-align { width: 222px; }
.g-num { width: 108px; }
.g-style { width: 128px; }
.g-cell { width: 98px; }
.g-edit { width: 158px; }
.g-addin { width: 39px; }
.g-data { width: 69px; }
.g-pdf { width: 62px; }

.tools {
    flex: 1;
    display: flex;
    justify-content: center;
}

.caption {
    height: 12px;
    display: flex;
    align-items: center;
    justify-content: center;
    white-space: nowrap;
    position: relative;
}

.caption svg {
    position: absolute;
    right: 1px;
    width: 7px;
    height: 7px;
}

.big {
    flex: 1;
    flex-direction: column;
    justify-content: flex-start;
    padding-top: 3px;
    min-width: 0;
}

.big > svg:first-child {
    width: 20px;
    height: 20px;
    margin-bottom: 2px;
}

.big span svg {
    display: inline-block;
    width: 8px;
    height: 8px;
    vertical-align: middle;
}

.narrow {
    font-size: 7px;
}

.rows {
    display: flex;
    flex-direction: column;
}

.rows button {
    height: 17px;
    gap: 2px;
    justify-content: flex-start;
}

.rows .far {
    margin-left: 8px;
}

.g-clip .rows {
    width: 91px;
    font-size: 7px;
}

.g-edit .rows {
    width: 80px;
    padding-left: 8px;
}

.lines {
    display: flex;
    flex-direction: column;
    justify-content: flex-start;
    gap: 4px;
    padding-top: 4px;
}

.line {
    height: 18px;
    display: flex;
    align-items: center;
}

.g-font .line,
.g-num .line {
    padding-left: 5px;
}

.t {
    width: 17px;
    height: 16px;
    font-size: 9px;
}

.serif {
    font-family: "Liberation Serif", serif;
    font-size: 10px;
}

.bar {
    border-left: 1px solid #ddd;
    margin-left: 2px;
}

.on {
    background-color: #e6e6e6;
    border: 1px solid #888;
    border-radius: 3px;
}

.combo {
    position: relative;
    height: 16px;
    margin-right: 2px;
}

.combo select {
    appearance: none;
    width: 100%;
    height: 16px;
    padding-left: 2px;
    border: 1px solid #999;
    border-radius: 3px;
    background-color: #fff;
}

.combo svg {
    position: absolute;
    top: 4px;
    right: 1px;
    width: 8px;
    height: 8px;
}

.font-name {
    width: 113px;
}

.font-size {
    width: 27px;
}

.combo.font-size select {
    font-size: 9px;
}

.format {
    width: 98px;
}

.grow {
    font-size: 11px;
}

.t sup {
    font-size: 8px;
    align-self: flex-start;
    color: #2b6cb0;
}

.color {
    height: 12px;
    border-bottom: 3px solid #d22;
    width: 12px;
    margin: 0 2px;
    font-size: 10px;
    line-height: 8px;
}

.ruby {
    font-size: 6px;
    line-height: 6px;
    color: #888;
}

.align-left {
    width: 98px;
    padding-left: 6px;
    border-right: 1px solid #ddd;
}

.align-right {
    flex: 1;
    padding-left: 6px;
}

.align-right .line {
    justify-content: flex-start;
    gap: 2px;
}

.align-right .far {
    margin-left: 4px;
}

.percent {
    font-size: 12px;
}

.digits {
    font-size: 6px;
    line-height: 6px;
}

.digits em {
    font-style: normal;
    color: #2b88d8;
}

.g-cell .tools {
    padding: 0 4px;
}

.g-style .tools {
    padding: 0 2px;
}

.collapse {
    margin-left: auto;
    margin-right: 4px;
    align-self: flex-end;
    height: 16px;
}

.collapse svg {
    width: 12px;
    height: 12px;
}

/* 数式バー */
.formula {
    flex: none;
    height: 20px;
    margin: 0 6px 5px;
    display: flex;
    align-items: stretch;
}

.name-box,
.fx,
.formula-input {
    display: flex;
    align-items: center;
    background-color: #fff;
    border: 1px solid #ddd;
    border-radius: 3px;
}

.name-box {
    width: 141px;
    padding: 0 1px 0 4px;
    font-size: 10px;
}

.name-box input,
.formula-input input {
    flex: 1;
    min-width: 0;
}

.dots {
    width: 14px;
    text-align: center;
    font-size: 10px;
    line-height: 20px;
}

.fx {
    width: 57px;
    justify-content: space-around;
    margin-right: 3px;
}

.fn {
    font-family: "Liberation Serif", serif;
    font-style: italic;
    font-weight: bold;
    font-size: 12px;
}

.formula-input {
    flex: 1;
}

/* シート */
.sheet {
    flex: 1;
    min-height: 0;
    display: flex;
}

.cells {
    flex: 1;
    min-width: 0;
    position: relative;
    overflow: hidden;
}

table {
    width: 100%;
    min-width: 1266px;
    table-layout: fixed;
    border-spacing: 0;
    background-color: #fff;
    font-family: "Noto Sans CJK JP", sans-serif;
    line-height: 12px;
}

.col-number {
    width: 17px;
}

th {
    height: 14px;
    padding: 0;
    background-color: #f0f0f0;
    border-right: 1px solid #ddd;
    border-bottom: 1px solid #e4e4e4;
    font-family: "Open Sans", sans-serif;
    font-weight: normal;
    color: #666;
    white-space: nowrap;
}

thead th {
    border-bottom-color: #aaa;
    line-height: 10px;
    vertical-align: top;
}

tbody th {
    font-size: 7px;
    border-right-color: #bbb;
}

.corner {
    background: linear-gradient(135deg, #f0f0f0 60%, #ccc 60%);
}

.frozen,
.c-A {
    border-right-color: #777;
}

thead .picked {
    background-color: #ddd;
    border-bottom: 2px solid #1e6b45;
}

tbody .picked {
    background-color: #ddd;
    border-right: 2px solid #1e6b45;
}

td {
    height: 14px;
    padding: 0;
    border-right: 1px solid #e0e0e0;
    border-bottom: 1px solid #e8e8e8;
    text-align: center;
    white-space: nowrap;
    font-size: 9px;
    line-height: 12px;
    color: #444;
}

td.c-A {
    border-right-color: #444;
}

.row-2 td,
.row-2 th {
    height: 19px;
}

.row-1 .c-A,
.row-2 .c-A,
.row-3 .c-A {
    border-right-color: #999;
}

.row-4 td {
    font-size: 8px;
    border-bottom-color: #aaa;
}

.line-bottom {
    border-bottom-color: #333;
}

.line-right {
    border-right-color: #222;
}

.row-4 .c-F {
    text-align: right;
    padding-right: 2px;
}

.row-4 .c-H,
.row-4 .c-J,
.row-4 .c-L,
.row-4 .c-M,
.row-4 .c-N,
.row-4 .c-W {
    text-align: left;
    padding-left: 1px;
}

.c-F,
.c-G {
    border-right-color: #eee;
}

.wave {
    font-family: "Liberation Sans", sans-serif;
    font-size: 12px;
    color: #222;
}

td.title {
    text-align: left;
    padding-left: 38px;
    font-size: 12px;
    line-height: 18px;
    text-decoration: underline;
}

td.summary {
    font-size: 8px;
    border-top: 1px solid #333;
    border-bottom-color: #333;
    border-right-color: #222;
}

.cursor {
    position: relative;
}

.selected {
    position: absolute;
    inset: -2px -1px -2px -2px;
    border: 2px solid #1e6b45;
}

.selected::after {
    content: "";
    position: absolute;
    right: -3px;
    bottom: -3px;
    width: 5px;
    height: 5px;
    background-color: #1e6b45;
    border: 1px solid #fff;
}

.smart {
    position: absolute;
    left: 43px;
    top: -19px;
    width: 18px;
    height: 18px;
    background-color: #fff;
    border: 1px solid #aaa;
    border-radius: 3px;
    box-shadow: 0 1px 2px rgba(0, 0, 0, 0.2);
}

.form-button {
    position: absolute;
    top: 29px;
    width: 62px;
    height: 18px;
    background-color: #f0f0f0;
    border: 1px solid #ddd;
    border-right: 2px solid #888;
    border-bottom: 2px solid #888;
    color: #666;
}

.start { left: 30px; }
.end { left: 104px; }
.total { left: 370px; }

.pointer {
    position: absolute;
    left: 117px;
    top: 23px;
    width: 34px;
    height: 34px;
    border-radius: 50%;
    background-color: rgba(245, 236, 20, 0.7);
}

.pointer svg {
    width: 10px;
    height: 16px;
    margin: 17px 0 0 16px;
}

/* スクロールバー */
.vscroll {
    width: 14px;
    display: flex;
    flex-direction: column;
    align-items: center;
    padding: 2px 0 1px;
    border-left: 1px solid #ddd;
}

.vscroll svg,
.hscroll svg {
    width: 7px;
    height: 7px;
}

.vscroll .track {
    flex: 1;
    padding-top: 2px;
}

.thumb {
    background-color: #6e6e6e;
    border-radius: 3px;
}

.vscroll .thumb {
    width: 6px;
    height: 58%;
}

/* シート見出し */
.sheet-tabs {
    flex: none;
    height: 20px;
    display: flex;
    align-items: center;
    padding: 1px 14px 0 12px;
    font-size: 10px;
    line-height: 14px;
}

.nav {
    width: 21px;
}

.nav svg,
.add svg {
    width: 8px;
    height: 8px;
}

.tab {
    width: 32px;
    height: 13px;
    border-right: 1px solid #ccc;
}

.mid {
    width: 39px;
}

.wide {
    width: 46px;
    font-size: 9px;
}

.wider {
    width: 55px;
    font-size: 9px;
}

.sheet-tabs .active {
    height: 19px;
    background-color: #fff;
    border: none;
    border-radius: 0 0 3px 3px;
}

.active span {
    border-bottom: 1px solid #107c41;
}

.add {
    width: 62px;
}

.hscroll {
    width: 502px;
    margin-left: auto;
    display: flex;
    align-items: center;
}

.hscroll .dots {
    margin-right: 6px;
}

.hscroll .thumb {
    flex: 1;
    height: 6px;
    margin: 0 2px;
}

/* ステータスバー */
.status {
    flex: none;
    height: 16px;
    display: flex;
    align-items: center;
    gap: 11px;
    padding: 0 5px 0 8px;
    background-color: #f7f7f7;
}

.status .macro {
    width: 10px;
    height: 10px;
}

.views {
    margin-left: auto;
    display: flex;
    align-items: center;
}

.views button {
    width: 27px;
    height: 14px;
}

.views svg {
    width: 10px;
    height: 10px;
}

.views .on {
    background-color: #ddd;
    border: none;
    border-radius: 0;
}

.sign {
    width: 12px;
    text-align: center;
    font-size: 10px;
}

.views input {
    appearance: none;
    width: 66px;
    height: 10px;
    background: linear-gradient(#888, #888) center / 100% 1px no-repeat;
}

.views input::-webkit-slider-thumb {
    appearance: none;
    width: 3px;
    height: 8px;
    background-color: #555;
}

.zoom {
    width: 23px;
    text-align: right;
}

/* タスクバー */
.taskbar {
    flex: none;
    height: 27px;
    display: flex;
    align-items: stretch;
    background-color: #101010;
    color: #eee;
}

.win {
    width: 32px;
}

.task-search {
    width: 192px;
    display: flex;
    align-items: center;
    gap: 7px;
    padding: 0 6px 0 7px;
    background-color: #f3f3f3;
    color: #333;
    font-size: 9px;
}

.task-search input {
    flex: 1;
    min-width: 0;
}

.spark {
    width: 42px;
    height: 20px;
}

.apps {
    width: 491px;
    display: flex;
}

.apps button {
    flex: 1;
    position: relative;
    border-bottom: 2px solid transparent;
}

.apps svg {
    width: 18px;
    height: 16px;
}

.apps .running {
    border-color: #76b9ed;
}

.apps .current {
    background-color: #333;
}

.tag {
    position: absolute;
    bottom: 1px;
    font-size: 6px;
    line-height: 6px;
    font-weight: bold;
}

.tray {
    margin-left: auto;
    display: flex;
    align-items: center;
    gap: 4px;
    padding-right: 16px;
}

.ime {
    width: 12px;
    text-align: center;
    font-size: 12px;
    font-weight: bold;
}

.moon {
    margin-left: 3px;
}

.clock {
    width: 52px;
    text-align: center;
    font-family: "Liberation Sans", sans-serif;
    line-height: 12px;
}
```
